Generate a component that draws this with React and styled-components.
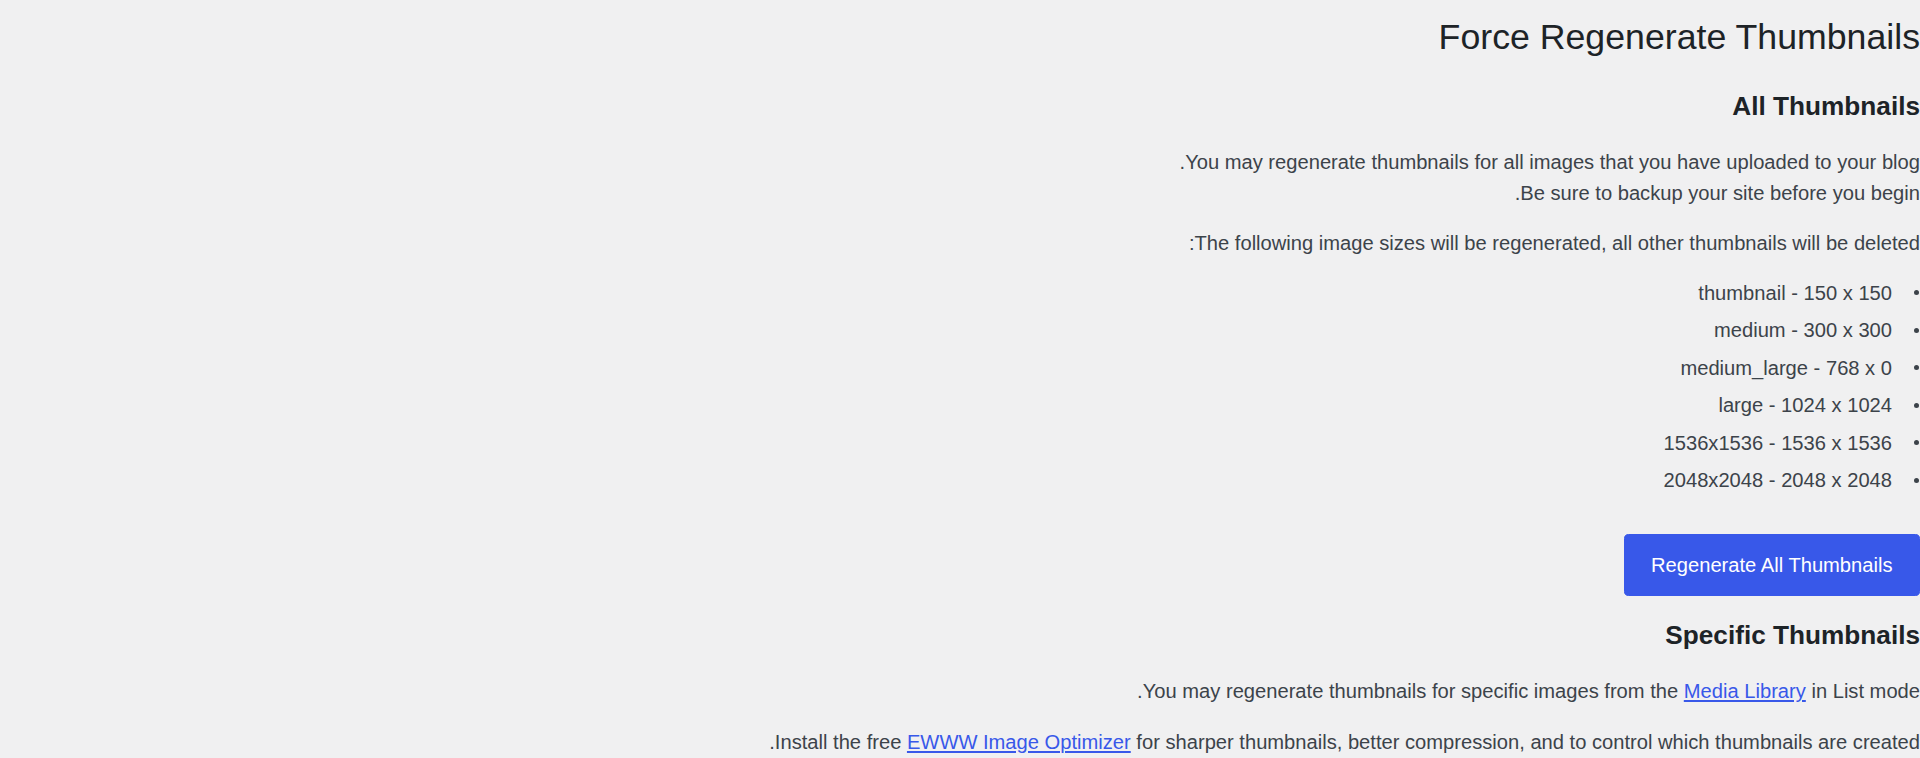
import React from 'react';
import styled, { createGlobalStyle } from 'styled-components';

const colours = {
  page: '#f0f0f1',
  heading: '#1d2327',
  text: '#3c434a',
  accent: '#3858e9',
};

const GlobalStyle = createGlobalStyle`
  html, body {
    margin: 0;
    padding: 0;
    background: ${colours.page};
  }

  body {
    font-family: "Liberation Sans", Arial, sans-serif;
    color: ${colours.text};
    overflow: hidden;
  }
`;

const Wrap = styled.div`
  direction: rtl;
  padding: 14px 0 0 0;
`;

const Title = styled.h1`
  margin: 0 0 30px;
  font-size: 35.7px;
  line-height: 46px;
  font-weight: 400;
  color: ${colours.heading};
`;

const SectionHeading = styled.h2`
  margin: 0 0 23px;
  font-size: 26.2px;
  line-height: 33.8px;
  font-weight: 700;
  color: ${colours.heading};
`;

const Text = styled.p`
  margin: 0 0 20px;
  font-size: 20.15px;
  line-height: 30.7px;
`;

const Link = styled.a`
  color: ${colours.accent};
  text-decoration: underline;
`;

const SizeList = styled.ul`
  margin: 0;
  padding: 0 1.5px 0 0;
  list-style: none;
`;

const SizeItem = styled.li`
  display: flex;
  align-items: center;
  gap: 21.5px;
  font-size: 20.15px;
  line-height: 28px;
  margin-bottom: 9.5px;
`;

const Bullet = styled.span`
  flex: none;
  width: 5px;
  height: 5px;
  border-radius: 50%;
  background: ${colours.text};
`;

const Actions = styled.div`
  display: flex;
  margin: 40px 0 23px;
`;

const PrimaryButton = styled.button`
  height: 62px;
  padding: 0 26.5px;
  border: 1px solid ${colours.accent};
  border-radius: 4.6px;
  background: ${colours.accent};
  color: #fff;
  font-family: inherit;
  font-size: 20.15px;
  cursor: pointer;
`;

const sizes = [
  ['thumbnail', 150, 150],
  ['medium', 300, 300],
  ['medium_large', 768, 0],
  ['large', 1024, 1024],
  ['1536x1536', 1536, 1536],
  ['2048x2048', 2048, 2048],
];

export default function App() {
  return (
    <>
      <GlobalStyle />
      <Wrap>
        <Title>Force Regenerate Thumbnails</Title>

        <SectionHeading>All Thumbnails</SectionHeading>
        <Text>
          You may regenerate thumbnails for all images that you have uploaded to your blog.
          <br />
          Be sure to backup your site before you begin.
        </Text>
        <Text>The following image sizes will be regenerated, all other thumbnails will be deleted:</Text>
        <SizeList>
          {sizes.map(([name, w, h]) => (
            <SizeItem key={name}>
              <Bullet />
              <span>{`${name} - ${w} x ${h}`}</span>
            </SizeItem>
          ))}
        </SizeList>
        <Actions>
          <PrimaryButton type="button">Regenerate All Thumbnails</PrimaryButton>
        </Actions>

        <SectionHeading>Specific Thumbnails</SectionHeading>
        <Text>
          You may regenerate thumbnails for specific images from the <Link href="#">Media Library</Link> in List mode.
        </Text>
        <Text>
          Install the free <Link href="#">EWWW Image Optimizer</Link> for sharper thumbnails, better compression, and to control which thumbnails are created.
        </Text>
      </Wrap>
    </>
  );
}
